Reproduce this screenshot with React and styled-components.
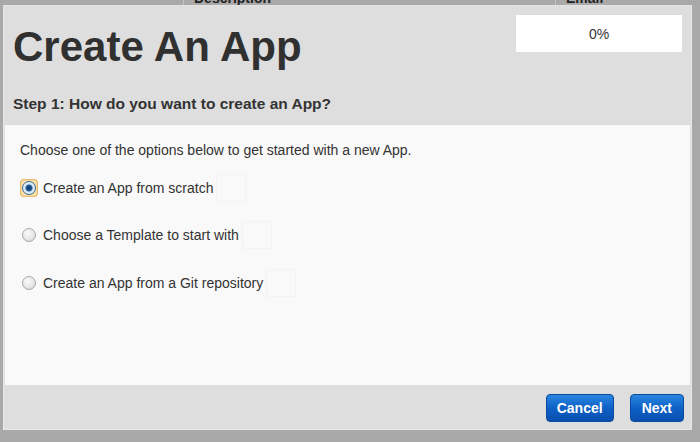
import styled, { createGlobalStyle } from "styled-components";

const Global = createGlobalStyle`
  html, body {
    margin: 0;
    padding: 0;
    background: #a8a8a8;
    font-family: Arial, "Liberation Sans", sans-serif;
    color: #333;
  }
`;

const Page = styled.div`
  width: 700px;
  height: 442px;
  overflow: hidden;
  background: #a9a9a9;
`;

const BackTable = styled.div`
  display: flex;
  height: 5px;
  overflow: hidden;
  font-size: 14px;
  font-weight: bold;
  color: #222;
`;

const BackCol = styled.div`
  box-sizing: border-box;
  width: ${(p) => p.w}px;
  border-left: ${(p) => (p.line ? "1px solid #c4c4c4" : "none")};
  padding-left: 10px;
  line-height: 5px;
  margin-top: -4px;
`;

const Modal = styled.div`
  margin: 0 8px 0 3px;
  height: 425px;
  background: #dedede;
  border: 1px solid #e8e8e8;
  border-top-color: #e4e4e4;
  display: flex;
  flex-direction: column;
  box-sizing: border-box;
`;

const Header = styled.div`
  display: flex;
  justify-content: space-between;
  align-items: flex-start;
  padding: 9px 9px 0 9px;
  height: 72px;
  box-sizing: border-box;
`;

const Title = styled.h1`
  margin: 0;
  margin-top: 8px;
  font-size: 42px;
  line-height: 48px;
  font-weight: bold;
  color: #303030;
`;

const Progress = styled.div`
  width: 166px;
  height: 37px;
  background: #fff;
  display: flex;
  align-items: center;
  justify-content: center;
  font-size: 14px;
  color: #333;
`;

const Step = styled.h2`
  margin: 0;
  padding: 5px 9px 0 9px;
  box-sizing: border-box;
  font-size: 15.5px;
  font-weight: bold;
  color: #333;
  height: 47px;
  display: flex;
  align-items: center;
`;

const Panel = styled.div`
  margin: 0 1px;
  background: #f9f9f9;
  height: 260px;
  padding: 17px 15px 0 15px;
  box-sizing: border-box;
  font-size: 14px;
`;

const Intro = styled.p`
  margin: 0 0 13px 0;
  line-height: 16px;
  color: #333;
`;

const Options = styled.div`
  display: flex;
  flex-direction: column;
  gap: 14.5px;
`;

const Option = styled.label`
  display: flex;
  align-items: center;
  height: 33px;
  color: #333;
  font-size: 14px;
`;

const RadioWrap = styled.span`
  width: 16px;
  height: 16px;
  display: flex;
  align-items: center;
  justify-content: center;
  margin: 0 6px 0 1px;
  border-radius: 3px;
  background: ${(p) => (p.focus ? "#f6dca7" : "transparent")};
  box-shadow: ${(p) => (p.focus ? "0 0 0 1px #e8b968" : "none")};
`;

const Radio = styled.span`
  width: 12px;
  height: 12px;
  border-radius: 50%;
  border: 1px solid ${(p) => (p.checked ? "#3a6c95" : "#a8a8a8")};
  background: ${(p) =>
    p.checked
      ? "radial-gradient(circle at 50% 50%, #10325a 0, #1f5f9c 3px, #d8e6f2 4px, #eef4fa 100%)"
      : "radial-gradient(circle at 40% 35%, #fafafa 0, #e4e4e4 60%, #cfcfcf 100%)"};
`;

const Ghost = styled.span`
  display: inline-block;
  width: 28px;
  height: 26px;
  margin-left: 3px;
  border: 1px solid #f3f3f3;
  border-radius: 3px;
`;

const Footer = styled.div`
  flex: 1;
  display: flex;
  justify-content: flex-end;
  align-items: center;
  gap: 16px;
  padding: 2px 7px 0 0;
`;

const Button = styled.button`
  height: 28px;
  padding: 0 ${(p) => p.pad}px;
  border: 1px solid #0a4aa0;
  border-radius: 4px;
  background: linear-gradient(#2a88e0, #0e60c6 50%, #0a50b0);
  color: #fff;
  font-family: Arial, "Liberation Sans", sans-serif;
  font-size: 14px;
  font-weight: bold;
  cursor: pointer;
`;

const options = [
  { label: "Create an App from scratch", checked: true },
  { label: "Choose a Template to start with" },
  { label: "Create an App from a Git repository" },
];

export default function App() {
  return (
    <Page>
      <Global />
      <BackTable>
        <BackCol w={183}>&nbsp;</BackCol>
        <BackCol w={372} line>Description</BackCol>
        <BackCol w={145} line>Email</BackCol>
      </BackTable>
      <Modal>
        <Header>
          <Title>Create An App</Title>
          <Progress>0%</Progress>
        </Header>
        <Step>Step 1: How do you want to create an App?</Step>
        <Panel>
          <Intro>Choose one of the options below to get started with a new App.</Intro>
          <Options>
            {options.map((o) => (
              <Option key={o.label}>
                <RadioWrap focus={o.checked}>
                  <Radio checked={o.checked} />
                </RadioWrap>
                {o.label}
                <Ghost />
              </Option>
            ))}
          </Options>
        </Panel>
        <Footer>
          <Button pad={10}>Cancel</Button>
          <Button pad={11}>Next</Button>
        </Footer>
      </Modal>
    </Page>
  );
}
